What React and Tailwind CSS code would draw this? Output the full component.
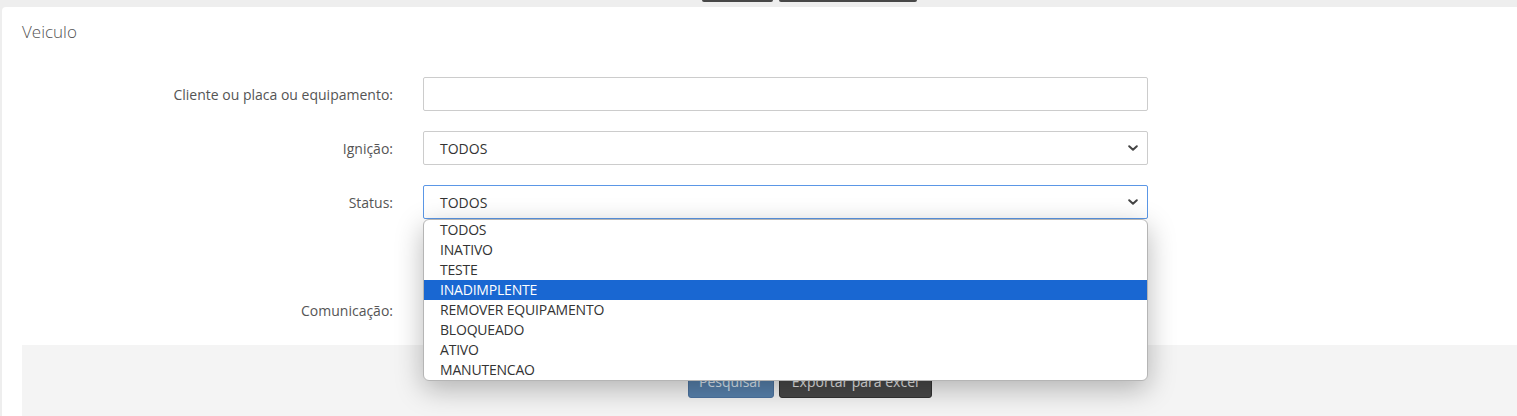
import React from 'react';

const STATUS = ['TODOS', 'INATIVO', 'TESTE', 'INADIMPLENTE', 'REMOVER EQUIPAMENTO', 'BLOQUEADO', 'ATIVO', 'MANUTENCAO'];

function Chevron() {
  return (
    <svg width="10" height="6" viewBox="0 0 10 6" className="text-[#444]">
      <path d="M1.2 1.2 5 4.7 8.8 1.2" fill="none" stroke="currentColor" strokeWidth="2" strokeLinecap="round" strokeLinejoin="round" />
    </svg>
  );
}

function Row({ label, children }) {
  return (
    <div className="flex items-center h-[34px] mb-[20px]">
      <label className="w-[371px] text-right text-[14px] text-[#555]">{label}</label>
      <div className="ml-[30px] w-[725px] h-full relative">{children}</div>
    </div>
  );
}

function SelectBox({ value, focused }) {
  return (
    <div
      className={`h-full flex items-center justify-between pl-[16px] pr-[9px] rounded-[2px] border text-[14px] text-[#333] bg-white ${
        focused ? 'border-[#5b97e6]' : 'border-[#ccc]'
      }`}
    >
      <span>{value}</span>
      <Chevron />
    </div>
  );
}

export default function App() {
  return (
    <div className="w-full h-[416px] overflow-hidden bg-[#eeeeee] flex flex-col font-['Open_Sans','Liberation_Sans',sans-serif]">
      {/* top toolbar, scrolled out of view */}
      <div className="h-[7px] flex items-start gap-[6px] pl-[702px]">
        <div className="w-[71px] h-[2px] bg-[#484848] rounded-b-[3px]" />
        <div className="w-[138px] h-[2px] bg-[#484848] rounded-b-[3px]" />
      </div>

      <div className="flex-1 ml-[2px] bg-white rounded-tl-[4px] flex flex-col">
        <div className="h-[50px] flex items-center px-[20px] text-[17px] font-light text-[#555]">Veiculo</div>

        <div className="pl-[20px] pt-[20px]">
          <Row label="Cliente ou placa ou equipamento:">
            <div className="h-full rounded-[2px] border border-[#ccc] bg-white" />
          </Row>
          <Row label="Ignição:">
            <SelectBox value="TODOS" />
          </Row>
          <Row label="Status:">
            <SelectBox value="TODOS" focused />
            <ul className="absolute z-10 left-0 top-[34px] w-full bg-white border border-[#b5b5b5] rounded-[6px] shadow-[0_8px_28px_rgba(0,0,0,0.28)] overflow-hidden">
              {STATUS.map((s) => (
                <li
                  key={s}
                  className={`h-[20px] leading-[20px] pl-[16px] text-[14px] tracking-[-0.2px] ${
                    s === 'INADIMPLENTE' ? 'bg-[#1967d2] text-white' : 'text-[#333]'
                  }`}
                >
                  {s}
                </li>
              ))}
            </ul>
          </Row>
          <Row label="">
            <div className="h-full rounded-[2px] border border-[#ccc] bg-white" />
          </Row>
          <Row label="Comunicação:">
            <SelectBox value="" />
          </Row>
        </div>

        <div className="ml-[20px] mt-[-2px] flex-1 bg-[#f4f4f4] pt-[19px] pl-[666px] flex items-start gap-[5px]">
          <button className="h-[34px] px-[10px] rounded-[3px] bg-[#5781ac] border border-[#4c73a0] text-[14px] text-[#dce6f0]">
            Pesquisar
          </button>
          <button className="h-[34px] px-[12px] rounded-[3px] bg-[#484848] border border-[#333] text-[14px] text-[#e6e6e6]">
            Exportar para excel
          </button>
        </div>
      </div>
    </div>
  );
}
